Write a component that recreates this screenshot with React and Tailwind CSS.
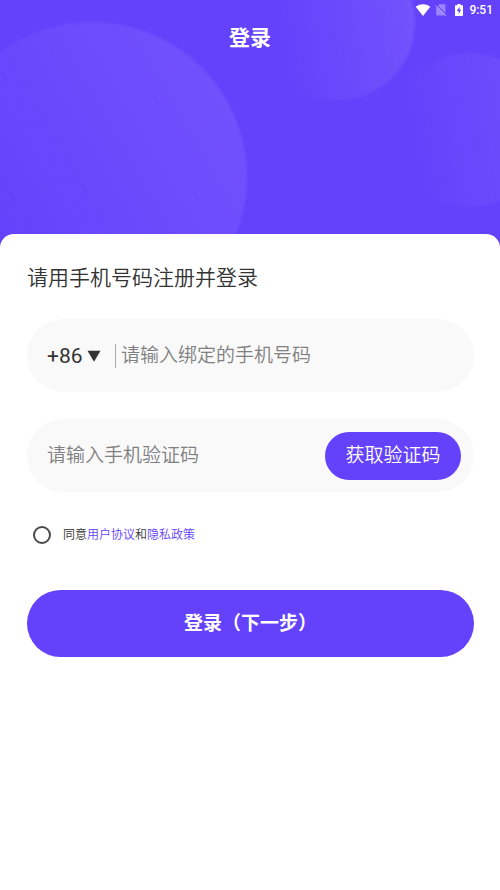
import React, { useState } from 'react';

const dialCodes = ['+86', '+852', '+853', '+886'];

function StatusBar() {
  return (
    <div className="flex h-5 items-center justify-end pr-[7px] text-white">
      <svg className="mr-1 h-3 w-4" viewBox="0 0 16 12" fill="currentColor">
        <path d="M8 12 L0.7 2.7 C5 -0.6 11 -0.6 15.3 2.7 Z" />
      </svg>
      <svg className="mr-1.5 h-3 w-3" viewBox="2 0 12 12">
        <path
          d="M6.4 0.3 H11.4 Q12.4 0.3 12.4 1.3 V11.4 H3.2 V3.5 Z"
          fill="currentColor"
          opacity="0.35"
        />
        <path d="M2.9 0.4 L13.9 11.4" stroke="#6442fc" strokeWidth="1.2" />
        <path
          d="M2.2 1 L13.2 12"
          stroke="currentColor"
          strokeWidth="1"
          opacity="0.35"
        />
      </svg>
      <svg className="mr-1 h-3 w-3" viewBox="0 0 12 12">
        <path
          d="M4.4 0 H7.6 V1.2 H9.3 Q10 1.2 10 1.9 V11.3 Q10 12 9.3 12 H2.7 Q2 12 2 11.3 V1.9 Q2 1.2 2.7 1.2 H4.4 Z"
          fill="currentColor"
        />
        <path d="M6.6 2.8 L3.8 7 H5.6 V10.2 L8.2 5.8 H6.6 Z" fill="#6442fc" />
      </svg>
      <span className="text-[12px] leading-5 font-medium">9:51</span>
    </div>
  );
}

function Bubbles() {
  return (
    <div aria-hidden="true">
      <div className="absolute top-[22px] left-[-63px] size-[310px] rounded-full bg-linear-60 from-white/0 from-20% to-white/10 blur-[1px]" />
      <div className="absolute top-[-54px] left-[261px] size-[154px] rounded-full bg-linear-80 from-white/0 from-15% to-white/10 blur-[1px]" />
      <div className="absolute top-[53px] left-[392px] size-[154px] rounded-full bg-linear-80 from-white/0 from-15% to-white/8 blur-[1px]" />
    </div>
  );
}

export default function App() {
  const [dialCode, setDialCode] = useState(dialCodes[0]);
  const [phone, setPhone] = useState('');
  const [code, setCode] = useState('');
  const [agreed, setAgreed] = useState(false);

  return (
    <div className="min-h-screen bg-white font-[Roboto,'Noto_Sans_CJK_SC',sans-serif] text-[#333333]">
      <header className="relative h-62 overflow-hidden bg-[#6442fc]">
        <Bubbles />
        <div className="relative">
          <StatusBar />
          <h1 className="text-center text-[21px] leading-9 font-bold text-white">
            登录
          </h1>
        </div>
      </header>

      <main className="relative -mt-3.5 rounded-t-[14px] bg-white pt-7 pr-[26px] pl-[27px]">
        <h2 className="text-[21px] leading-8 font-[350]">
          请用手机号码注册并登录
        </h2>

        <form onSubmit={(e) => e.preventDefault()}>
          <div className="mt-[25px] flex h-[73px] items-center rounded-full bg-[#f9f9f9] px-5">
            <div className="relative flex items-center">
              <select
                aria-label="国家区号"
                className="w-14 appearance-none bg-transparent text-[21px] leading-8 outline-none"
                value={dialCode}
                onChange={(e) => setDialCode(e.target.value)}
              >
                {dialCodes.map((item) => (
                  <option key={item}>{item}</option>
                ))}
              </select>
              <svg
                className="pointer-events-none absolute right-0.5 h-3 w-3.5"
                viewBox="0 0 14 12"
                fill="currentColor"
              >
                <path d="M0.5 0.8 H13.5 L7 11.8 Z" />
              </svg>
            </div>
            <span className="ml-3 h-6 w-px bg-[#aaaaaa]" />
            <input
              type="tel"
              aria-label="手机号码"
              className="ml-[5px] min-w-0 flex-1 bg-transparent text-[19px] leading-8 font-[350] outline-none placeholder:text-[#808080]"
              placeholder="请输入绑定的手机号码"
              value={phone}
              onChange={(e) => setPhone(e.target.value)}
            />
          </div>

          <div className="mt-[27px] flex h-[73px] items-center rounded-full bg-[#f9f9f9] pr-[13px] pl-5">
            <input
              type="text"
              inputMode="numeric"
              aria-label="手机验证码"
              className="min-w-0 flex-1 bg-transparent text-[19px] leading-8 font-[350] outline-none placeholder:text-[#808080]"
              placeholder="请输入手机验证码"
              value={code}
              onChange={(e) => setCode(e.target.value)}
            />
            <button
              type="button"
              className="h-12 w-[136px] rounded-full bg-[#6442fc] text-[19px] leading-8 font-[350] text-white"
            >
              获取验证码
            </button>
          </div>

          <div className="mt-[33px] flex items-center pl-1.5 text-[12px] leading-5 font-[350]">
            <input
              id="agree"
              type="checkbox"
              className="size-[18px] appearance-none rounded-full border-2 border-[#4a4a4a] checked:bg-[#6442fc]"
              checked={agreed}
              onChange={(e) => setAgreed(e.target.checked)}
            />
            <label htmlFor="agree" className="pl-3">
              同意
            </label>
            <a href="#terms" className="text-[#6442fc]">
              用户协议
            </a>
            <span>和</span>
            <a href="#privacy" className="text-[#6442fc]">
              隐私政策
            </a>
          </div>

          <button
            type="submit"
            className="mt-[45px] h-[67px] w-full rounded-full bg-[#6442fc] text-[19px] leading-8 font-bold text-white"
          >
            登录（下一步）
          </button>
        </form>
      </main>
    </div>
  );
}
